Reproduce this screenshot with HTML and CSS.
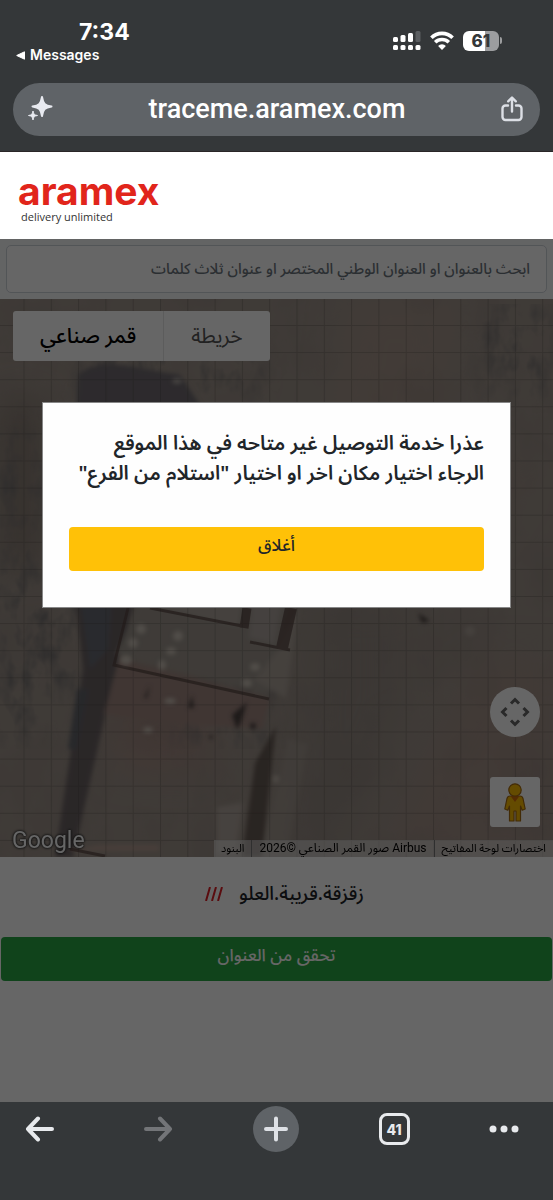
FILE: index.html
```html
<!DOCTYPE html>
<html lang="ar" dir="rtl">
<head>
  <meta charset="UTF-8">
  <meta name="viewport" content="width=device-width, initial-scale=1.0">
  <title>aramex</title>
  <link rel="stylesheet" href="styles.css">
</head>
<body>
  <!-- Browser top -->
  <header class="browser-top" dir="ltr" lang="en">
    <div class="status-bar">
      <div class="status-left">
        <span class="time">7:34</span>
        <a class="back-app" href="#">
          <svg width="9" height="9" viewBox="0 0 9 9"><path d="M8.500.8v7.400L.7 4.500z" fill="#fff" stroke="#fff" stroke-linejoin="round"/></svg>
          Messages
        </a>
      </div>
      <div class="status-icons">
        <svg width="28" height="21" viewBox="0 0 28 21" fill="#fff">
          <rect x="0" y="7" width="5" height="5" rx="1.500"/>
          <rect x="7.500" y="5" width="5" height="7" rx="1.500"/>
          <rect x="15" y="3" width="5" height="9" rx="1.500"/>
          <rect x="22.500" y="1" width="5" height="11" rx="1.500" fill="#5b5e61"/>
          <rect x="0" y="15" width="5" height="5" rx="1.500"/>
          <rect x="7.500" y="15" width="5" height="5" rx="1.500"/>
          <rect x="15" y="15" width="5" height="5" rx="1.500"/>
          <rect x="22.500" y="15" width="5" height="5" rx="1.500"/>
        </svg>
        <svg width="24" height="19" viewBox="0 0 24 19" fill="none" stroke="#fff" stroke-width="3.600">
          <path d="M1.400 6.800a15 15 0 0 1 21.200 0"/>
          <path d="M5.200 11.300a9.700 9.700 0 0 1 13.600 0"/>
          <path d="M12 19l-3.900-4a5.400 5.400 0 0 1 7.800 0z" fill="#fff" stroke="none"/>
        </svg>
        <div class="battery"><span class="battery-body">61</span><span class="battery-cap"></span></div>
      </div>
    </div>
    <div class="url-bar">
      <button class="icon-button" aria-label="Assistant">
        <svg width="26" height="28" viewBox="0 0 26 28" fill="#e8eaf0">
          <path d="M15 2c1 6.500 2.800 8.600 9.500 9.500C17.800 12.400 16 14.500 15 21c-1-6.500-2.800-8.600-9.500-9.500C12.200 10.600 14 8.500 15 2z" stroke="#e8eaf0" stroke-width="2" stroke-linejoin="round"/>
          <path d="M6 16c.5 3.200 1.300 4 4.500 4.500C7.300 21 6.500 21.800 6 25c-.5-3.200-1.300-4-4.500-4.500C4.700 20 5.500 19.200 6 16z" stroke="#e8eaf0" stroke-linejoin="round"/>
        </svg>
      </button>
      <a class="url" href="#">traceme.aramex.com</a>
      <button class="icon-button" aria-label="Share">
        <svg width="22" height="26" viewBox="0 0 22 26" fill="none" stroke="#dcdfe5" stroke-width="2.400" stroke-linecap="round" stroke-linejoin="round">
          <path d="M7 9.500H4.500a3 3 0 0 0-3 3V21a3 3 0 0 0 3 3h13a3 3 0 0 0 3-3v-8.500a3 3 0 0 0-3-3H15"/>
          <path d="M11 15.500V2M7.200 5.300L11 1.500l3.800 3.800"/>
        </svg>
      </button>
    </div>
  </header>

  <!-- Logo -->
  <div class="brand" dir="ltr" lang="en">
    <a class="brand-link" href="#">
      <span class="brand-name">aramex</span>
      <span class="brand-tagline">delivery unlimited</span>
    </a>
  </div>

  <main class="page">
    <form class="search">
      <input class="search-input" type="text" aria-label="ابحث بالعنوان" placeholder="ابحث بالعنوان او العنوان الوطني المختصر او عنوان ثلاث كلمات">
    </form>

    <!-- Map -->
    <section class="map">
      <svg class="map-image" viewBox="0 0 553 558" preserveAspectRatio="xMidYMid slice" aria-hidden="true">
        <defs>
          <pattern id="grid" x="23.500" y="26" width="27.300" height="27.100" patternUnits="userSpaceOnUse">
            <path d="M.5 0v27.100M0 .5h27.300" stroke="#3c3532" stroke-opacity=".24" fill="none"/>
          </pattern>
          <filter id="soft" x="-20%" y="-20%" width="140%" height="140%"><feGaussianBlur stdDeviation="2"/></filter>
          <filter id="haze" x="-50%" y="-50%" width="200%" height="200%"><feGaussianBlur stdDeviation="18"/></filter>
          <filter id="terrain" x="0" y="0" width="100%" height="100%">
            <feTurbulence type="fractalNoise" baseFrequency=".018 .013" numOctaves="4" seed="8"/>
            <feColorMatrix values="0 0 0 0 .25  0 0 0 0 .2  0 0 0 0 .19  1.800 0 0 0 -.75"/>
          </filter>
          <filter id="scrub" x="0" y="0" width="100%" height="100%">
            <feTurbulence type="fractalNoise" baseFrequency=".06 .035" numOctaves="3" seed="3" result="n"/>
            <feColorMatrix in="n" values="0 0 0 0 .17  0 0 0 0 .16  0 0 0 0 .16  2.400 0 0 0 -1.050" result="c"/>
            <feGaussianBlur in="SourceAlpha" stdDeviation="12" result="m"/>
            <feComposite in="c" in2="m" operator="in"/>
          </filter>
        </defs>
        <rect width="553" height="558" fill="#9e938a"/>
        <g filter="url(#haze)">
          <path d="M350 0h110l-30 130 90 50-40 60-150-80z" fill="#a6958a"/>
          <path d="M480 360h73v198H380z" fill="#a39187"/>
          <path d="M310 300h90v110l-60 148h-40z" fill="#958b83"/>
          <path d="M0 100h40v170H0z" fill="#857970"/>
          <path d="M110 390h100v80h-90z" fill="#a58c83"/>
        </g>
        <rect width="553" height="558" filter="url(#terrain)" opacity=".35"/>
        <g filter="url(#scrub)">
          <rect x="0" y="130" width="38" height="310" fill="#000"/>
          <rect x="0" y="290" width="76" height="105" fill="#000"/>
          <rect x="484" y="5" width="69" height="85" fill="#000"/>
          <rect x="80" y="48" width="180" height="45" fill="#000"/>
          <rect x="170" y="380" width="110" height="70" fill="#000" opacity=".5"/>
        </g>
        <g filter="url(#soft)">
          <path d="M78 76q12-12 42-10l60 10 24 36v110H72z" fill="#706b70"/>
          <path d="M74 290h64l-26 96-39 172H55l28-188z" fill="#6b6263"/>
          <path d="M80 300h32l-4 50-18 20z" fill="#686a73"/>
          <path d="M68 450l9-60 12 0-12 60z" fill="#64656b"/>
          <path d="M139 305l150 0-20 90-153-40z" fill="#9d958d"/>
          <path d="M120 360l150 40-8 30-70-5-88-10z" fill="#a08780"/>
          <path d="M152 300l90 0-4 27-82-20z" fill="#ada49c"/>
          <path d="M252 303h30l-8 42-25-6z" fill="#aca39d"/>
          <path d="M299 309l-13 90-32-18 24-30z" fill="#aca299"/>
          <path d="M217 508l26-4-8 50h-18z" fill="#b0a59d"/>
          <path d="M276 427l-14 131h-20l13-94z" fill="#685b55"/>
          <path d="M288 440l-25 110h25l20-105z" fill="#aaa095" opacity=".5"/>
          <path d="M65 552h94v-6h-60z" fill="#b39b90"/>
        </g>
        <g fill="none" stroke="#594743" stroke-width="4" opacity=".75">
          <path d="M128 309l-14 57 155 34" stroke-width="3"/>
          <path d="M150 309l92 18M250 343l40 8" stroke-width="3"/>
          <path d="M247 309l-3 20" stroke-width="9"/>
          <path d="M291 309l-9 40" stroke-width="12"/>
          <path d="M70 550l35 7" stroke-width="3"/>
        </g>
        <g fill="#c9c0b5" filter="url(#soft)">
          <ellipse cx="141" cy="330" rx="5" ry="5"/>
          <ellipse cx="133" cy="344" rx="5" ry="5"/>
          <ellipse cx="126" cy="361" rx="6" ry="5"/>
          <ellipse cx="178" cy="337" rx="5" ry="5"/>
          <ellipse cx="171" cy="352" rx="5" ry="4"/>
          <ellipse cx="162" cy="366" rx="4" ry="5"/>
          <ellipse cx="255" cy="368" rx="5" ry="4"/>
          <ellipse cx="247" cy="384" rx="5" ry="4"/>
          <ellipse cx="170" cy="402" rx="6" ry="3"/>
          <ellipse cx="148" cy="431" rx="5" ry="3"/>
          <ellipse cx="470" cy="332" rx="5" ry="5" opacity=".4"/>
          <ellipse cx="276" cy="480" rx="3" ry="4" opacity=".8"/>
          <ellipse cx="177" cy="82" rx="5" ry="3" opacity=".7"/>
        </g>
        <g fill="#4b4340" filter="url(#soft)">
          <path d="M247 403l-6 20-4 8-5-15z"/>
          <path d="M192 396l-4 13h6zM150 386l-6 13h3z"/>
          <circle cx="253" cy="427" r="3"/>
          <path d="M418 314l12 8-8 2z"/>
          <circle cx="211" cy="438" r="2"/>
        </g>
        <rect width="553" height="558" fill="url(#grid)"/>
      </svg>

      <div class="map-type">
        <button class="map-type-button">خريطة</button>
        <button class="map-type-button active">قمر صناعي</button>
      </div>

      <div class="map-controls">
        <button class="map-move" aria-label="عناصر التحكم بالكاميرا">
          <svg width="30" height="30" viewBox="0 0 30 30" fill="none" stroke="#666" stroke-width="3">
            <path d="M11 6.500L15 2.500l4 4M11 23.500l4 4 4-4M6.500 11l-4 4 4 4M23.500 11l4 4-4 4"/>
          </svg>
        </button>
        <button class="map-pegman" aria-label="التجوّل الافتراضي">
          <svg width="22" height="39" viewBox="0 0 22 39" fill="#fbbc04" stroke="#a66b10" stroke-width="1.200" stroke-linejoin="round">
            <path d="M6 13h10c1.800 0 2.600.8 3 2.500L21.200 26l-3 1.200L16.500 23v15H12V28h-2v10H5.500V23l-1.700 4.200-3-1.200L3 15.500C3.400 13.800 4.200 13 6 13z"/>
            <path d="M6.500 13h9L11 19z" fill="#d56e0c" stroke="none"/>
            <circle cx="11" cy="7" r="6.200"/>
          </svg>
        </button>
      </div>

      <span class="google" dir="ltr" lang="en">Google</span>
      <div class="map-credits">
        <a href="#">اختصارات لوحة المفاتيح</a>
        <span>Airbus صور القمر الصناعي ©2026</span>
        <a href="#">البنود</a>
      </div>
    </section>

    <div class="words">
      <span>زقزقة.قريبة.العلو</span>
      <svg width="18" height="14" viewBox="0 0 18 14" stroke="#e11f26" stroke-width="2" fill="none"><path d="M5 0L1 14M11 0L7 14M17 0l-4 14"/></svg>
    </div>
    <div class="actions">
      <button class="btn btn-success">تحقق من العنوان</button>
    </div>

    <!-- Modal -->
    <div class="overlay">
      <div class="modal" role="dialog" aria-labelledby="message">
        <p class="modal-text" id="message">عذرا خدمة التوصيل غير متاحه في هذا الموقع<br>الرجاء اختيار مكان اخر او اختيار "استلام من الفرع"</p>
        <button class="btn btn-warning">أغلاق</button>
      </div>
    </div>
  </main>

  <!-- Browser toolbar -->
  <nav class="toolbar" dir="ltr" lang="en">
    <button class="tool" aria-label="Back">
      <svg width="30" height="26" viewBox="0 0 30 26" fill="none" stroke="#e8eaed" stroke-width="4" stroke-linecap="round" stroke-linejoin="round"><path d="M27 13H3M13 2.500L3 13l10 10.500"/></svg>
    </button>
    <button class="tool" aria-label="Forward">
      <svg width="30" height="26" viewBox="0 0 30 26" fill="none" stroke="#737578" stroke-width="4" stroke-linecap="round" stroke-linejoin="round"><path d="M3 13h24M17 2.500L27 13 17 23.500"/></svg>
    </button>
    <button class="tool tool-new" aria-label="New tab">
      <svg width="26" height="26" viewBox="0 0 26 26" stroke="#dee1e6" stroke-width="4" stroke-linecap="round"><path d="M13 2.500v21M3 13h20"/></svg>
    </button>
    <button class="tool" aria-label="Tabs"><span class="tab-count">41</span></button>
    <button class="tool tool-menu" aria-label="Menu">
      <svg width="30" height="8" viewBox="0 0 30 8" fill="#e8eaed"><circle cx="4" cy="4" r="3.500"/><circle cx="15" cy="4" r="3.500"/><circle cx="26" cy="4" r="3.500"/></svg>
    </button>
  </nav>
</body>
</html>
```

FILE: styles.css
```css
* {
  box-sizing: border-box;
}
body {
  margin: 0;
  min-height: 100vh;
  display: flex;
  flex-direction: column;
  font-family: "Noto Sans", "Noto Sans Arabic", "DejaVu Sans", sans-serif;
  font-weight: 500;
  color: #212529;
  background: #fff;
}
button {
  font-family: inherit;
  font-weight: inherit;
  border: none;
  padding: 0;
  cursor: pointer;
}
a {
  color: inherit;
  text-decoration: none;
}
svg {
  display: block;
}

/* Browser top */
.browser-top {
  background: #343739;
  color: #fff;
  font-family: Inter, sans-serif;
  padding: 18px 13px 15px;
  border-bottom: 1px solid #2a2627;
}
.status-bar {
  display: flex;
  justify-content: space-between;
  align-items: flex-start;
  height: 65px;
  padding: 0 38px 0 3px;
}
.time {
  display: block;
  font-size: 23px;
  font-weight: 700;
  line-height: 28px;
  padding-left: 63px;
}
.back-app {
  display: flex;
  align-items: center;
  gap: 5px;
  font-size: 14px;
  font-weight: 600;
  line-height: 18px;
}
.status-icons {
  display: flex;
  align-items: center;
  gap: 9px;
  padding-top: 12px;
}
.battery {
  display: flex;
  align-items: center;
  gap: 1px;
}
.battery-body {
  width: 36px;
  height: 20px;
  border-radius: 6px;
  background: linear-gradient(90deg, #fff 61%, #9c9d9f 61%);
  color: #343739;
  font-size: 17px;
  font-weight: 800;
  line-height: 20px;
  text-align: center;
}
.battery-cap {
  width: 2px;
  height: 7px;
  border-radius: 0 2px 2px 0;
  background: #9c9d9f;
}
.url-bar {
  display: flex;
  align-items: center;
  justify-content: space-between;
  height: 53px;
  padding: 0 17px 2px 14px;
  border-radius: 27px;
  background: #5f6367;
}
.icon-button {
  background: none;
}
.url {
  font-family: Roboto, sans-serif;
  font-size: 27px;
  font-weight: 500;
}

/* Logo */
.brand {
  padding: 23px 18px 15px;
  background: #fff;
}
.brand-link {
  display: flex;
  flex-direction: column;
  gap: 3px;
}
.brand-name {
  font-family: Inter, sans-serif;
  font-size: 39px;
  font-weight: 700;
  line-height: 32px;
  color: #e1251b;
}
.brand-tagline {
  font-family: "Open Sans", sans-serif;
  font-size: 11px;
  line-height: 14px;
  padding-left: 3px;
  color: #333;
}

/* Page */
.page {
  position: relative;
  flex: 1;
  background: #fff;
}
.search {
  padding: 6px;
  background: #f8f9fa;
}
.search-input {
  display: block;
  width: 100%;
  height: 48px;
  padding: 0 16px 2px;
  border: 1px solid #ced4da;
  border-radius: 5px;
  background: #fff;
  font-family: inherit;
  font-size: 15px;
  font-weight: inherit;
}
.search-input::placeholder {
  color: #6c757d;
  opacity: 1;
}
.map {
  position: relative;
  height: 558px;
  overflow: hidden;
}
.map-image {
  width: 100%;
  height: 100%;
}
.map-type {
  position: absolute;
  top: 12px;
  left: 13px;
  display: flex;
  border-radius: 3px;
  overflow: hidden;
}
.map-type-button {
  height: 50px;
  padding: 0 27px;
  background: #fff;
  color: #565656;
  font-size: 21px;
  font-weight: 400;
}
.map-type-button.active {
  color: #000;
  font-weight: 500;
  border-right: 1px solid #e6e6e6;
}
.map-controls {
  position: absolute;
  right: 13px;
  bottom: 30px;
  display: flex;
  flex-direction: column;
  gap: 40px;
}
.map-move,
.map-pegman {
  display: grid;
  place-items: center;
  width: 50px;
  height: 50px;
  background: #fff;
}
.map-move {
  border-radius: 50%;
}
.map-pegman {
  border-radius: 3px;
}
.google {
  position: absolute;
  left: 12px;
  bottom: 0;
  font-family: Roboto, sans-serif;
  font-size: 23px;
  font-weight: 400;
  line-height: 32px;
  color: #fff;
  text-shadow: 0 0 2px #333, 0 0 2px #333, 0 0 3px #333;
}
.map-credits {
  position: absolute;
  right: 0;
  bottom: 0;
  display: flex;
  background: rgba(245, 245, 245, 0.5);
  color: #000;
  font-family: Roboto, "Noto Sans Arabic", "DejaVu Sans", sans-serif;
  font-size: 12px;
  font-weight: 400;
  line-height: 17px;
}
.map-credits > * {
  padding: 0 7px;
  border-left: 1px solid #777;
}
.map-credits > a {
  font-size: 11px;
}
.map-credits > :last-child {
  border-left: none;
}
.words {
  display: flex;
  align-items: center;
  justify-content: center;
  gap: 16px;
  height: 80px;
  padding-bottom: 6px;
  padding-left: 16px;
  font-size: 19px;
}
.actions {
  padding: 0 1px;
}
.btn {
  display: block;
  width: 100%;
  height: 44px;
  padding-bottom: 6px;
  border-radius: 4px;
  font-size: 17px;
}
.btn-success {
  background: #28a745;
  color: #fff;
}
.btn-warning {
  background: #ffc107;
  color: #212529;
}

/* Modal */
.overlay {
  position: absolute;
  inset: 0;
  padding: 163px 42px 0;
  background: rgba(0, 0, 0, 0.6);
}
.modal {
  padding: 25px 26px 36px;
  border: 1px solid #888;
  background: #fefefe;
}
.modal-text {
  margin: 0 0 39px;
  font-size: 20px;
  font-weight: 600;
  line-height: 30px;
}

/* Browser toolbar */
.toolbar {
  display: grid;
  grid-template-columns: repeat(4, 1fr) auto;
  align-items: center;
  height: 98px;
  padding: 0 34px 44px 17px;
  background: #343739;
}
.tool {
  display: grid;
  place-items: center;
  width: 46px;
  height: 46px;
  background: none;
}
.tool-new {
  border-radius: 50%;
  background: #5f6367;
}
.tool-menu {
  width: 30px;
}
.tab-count {
  display: grid;
  place-items: center;
  width: 31px;
  height: 32px;
  border: 3px solid #e8eaed;
  border-radius: 8px;
  color: #e8eaed;
  font-family: Inter, sans-serif;
  font-size: 14px;
  font-weight: 800;
}
```
